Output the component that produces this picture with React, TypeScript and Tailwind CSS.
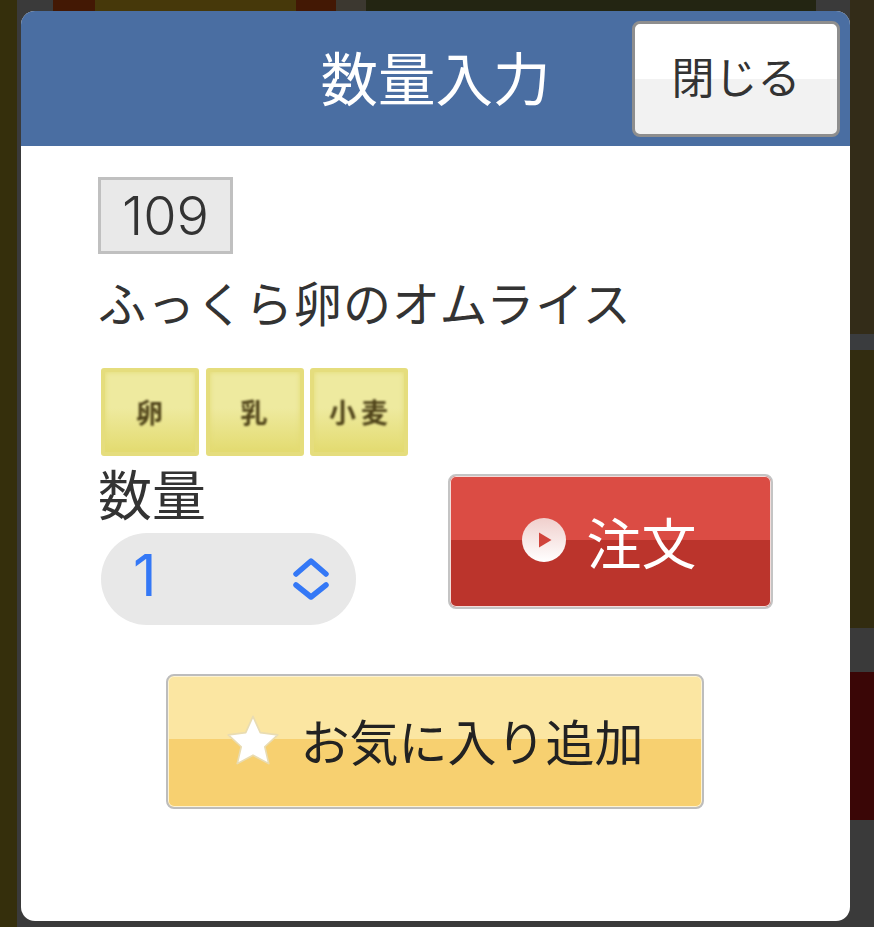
const jpFont = 'font-["Noto_Sans_CJK_JP","Noto_Sans",sans-serif]';
const latinFont = 'font-["Inter","Noto_Sans",sans-serif]';

// Dimmed page that shows through behind the dialog
function Backdrop() {
  return (
    <div className="absolute inset-0 flex overflow-hidden bg-[#3a3a3a]">
      <div className="h-full w-[17px] bg-[#352f0c]" />
      <div className="flex h-[12px] flex-1 pl-[36px]">
        <div className="w-[42px] bg-[#431804]" />
        <div className="w-[201px] bg-[#46380a]" />
        <div className="w-[40px] bg-[#431804]" />
        <div className="w-[30px] bg-[#3c3830]" />
        <div className="w-[450px] bg-[#232512]" />
      </div>
      <div className="flex h-full w-[24px] flex-col">
        <div className="h-[334px] bg-[#332c18]" />
        <div className="h-[16px] bg-[#3a3c3e]" />
        <div className="h-[278px] bg-[#322c10]" />
        <div className="h-[44px] bg-[#3a3a3a]" />
        <div className="h-[148px] bg-[#3a0606]" />
        <div className="flex-1 bg-[#3a3a3a]" />
      </div>
    </div>
  );
}

export default function App() {
  return (
    <div className={`relative h-[927px] w-[874px] overflow-hidden ${jpFont}`}>
      <Backdrop />
      <div className="relative ml-[21px] mt-[11px] h-[910px] w-[829px] overflow-hidden rounded-[14px] bg-white">
        <header className="grid h-[135px] grid-cols-[1fr_auto_1fr] items-center bg-[#4a6ea2] px-[10px]">
          <span />
          <h1 className="pb-[6px] text-[57.5px] leading-[72px] text-white">数量入力</h1>
          <button className="h-[116px] w-[208px] justify-self-end rounded-[8px] border-[3px] border-[#8e8e8e] bg-[linear-gradient(#ffffff_50%,#f2f2f2_50%)] pb-[6px] text-[43px] text-[#333333]">
            閉じる
          </button>
        </header>

        <main className="pl-[77px] pt-[31px]">
          <div className={`flex h-[77px] w-[135px] items-center justify-center border-[3px] border-[#c0c0c0] bg-[#e9e9e9] text-[54px] font-light text-[#333333] ${latinFont}`}>
            109
          </div>
          <p className="mt-[15px] text-[48px] leading-[64px] tracking-[1px] text-[#333333]">ふっくら卵のオムライス</p>

          <div className="mt-[35px] flex gap-[6.5px] pl-[3px]">
            {['卵', '乳', '小麦'].map((label) => (
              <span
                key={label}
                className="flex h-[88px] w-[98px] items-center justify-center rounded-[3px] border-[4px] border-[#e5dd7d] bg-[linear-gradient(#eeea9f_45%,#e3db70)] shadow-[inset_0_0_5px_#e3da74]"
              >
                <span className="pl-[4px] text-[27px] font-bold tracking-[5px] text-[#4f4319] blur-[0.8px]">{label}</span>
              </span>
            ))}
          </div>

          <div className="mt-[5px] flex">
            <div className="w-[350px]">
              <label className="block text-[54px] leading-[64px] text-[#333333]">数量</label>
              <div className="ml-[3px] mt-[8px] flex h-[92px] w-[255px] items-center justify-between rounded-[46px] bg-[#e8e8e8] pl-[32px] pr-[26px]">
                <span className={`pb-[8px] text-[58px] text-[#3478f6] ${latinFont}`}>1</span>
                <svg viewBox="0 0 38 44" className="h-[44px] w-[38px]" fill="none" stroke="#3478f6" strokeWidth="5.5" strokeLinecap="round" strokeLinejoin="round">
                  <path d="M4 17 L19 4 L34 17" />
                  <path d="M4 28 L19 40 L34 28" />
                </svg>
              </div>
            </div>
            <button className="mt-[13px] flex h-[135px] w-[325px] items-center justify-center gap-[20px] rounded-[8px] border-2 border-[#c4c4c4] bg-[linear-gradient(#db4c44_49%,#bb342c_49%)] pb-[3px] pr-[2px] text-[55px] text-white shadow-[inset_0_0_0_1px_#f3dcda]">
              <span className="flex h-[44px] w-[44px] items-center justify-center rounded-full bg-[linear-gradient(#f0cfcc,#ffffff)]">
                <svg viewBox="0 0 12 12" className="h-[20px] w-[20px]">
                  <path d="M3 1.5 L10.5 6 L3 10.5 Z" fill="#d0443c" />
                </svg>
              </span>
              注文
            </button>
          </div>

          <button className="ml-[68px] mt-[49px] flex h-[135px] w-[538px] items-center justify-center gap-[20px] rounded-[8px] border-2 border-[#bdbdbd] bg-[linear-gradient(#fbe6a2_48%,#f7d070_48%)] pb-[3px] text-[49px] text-[#222222] shadow-[inset_0_0_0_1px_#fdf3d2]">
            <svg viewBox="0 0 48 48" className="h-[54px] w-[54px]">
              <path
                d="M24 3 L30.5 17.5 L46 19.5 L34.5 30 L38 45 L24 37.5 L10 45 L13.5 30 L2 19.5 L17.5 17.5 Z"
                fill="#ffffff"
                stroke="#e9dcb2"
                strokeWidth="1.5"
                strokeLinejoin="round"
              />
            </svg>
            お気に入り追加
          </button>
        </main>
      </div>
    </div>
  );
}
